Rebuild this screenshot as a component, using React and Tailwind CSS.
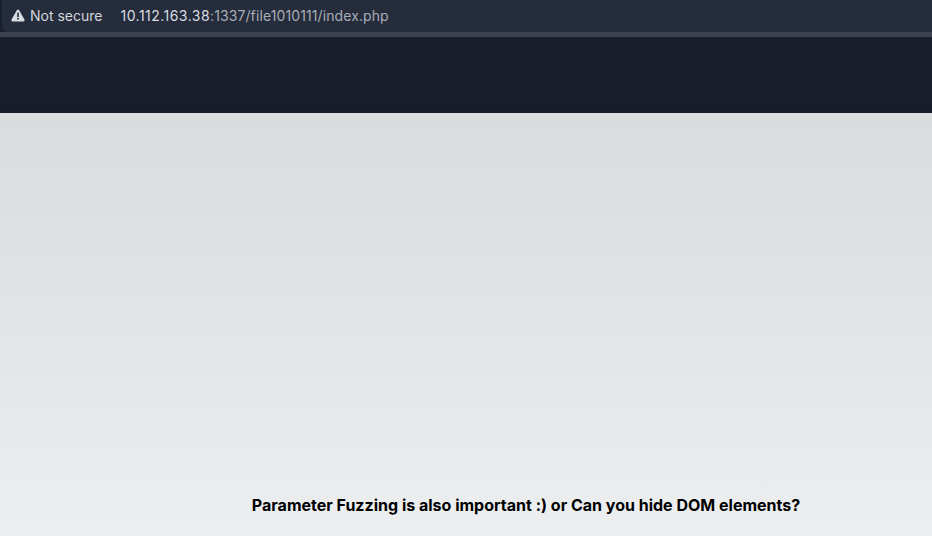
import React from 'react';

const WarningIcon = () => (
    <svg width="14" height="13" viewBox="0 0 14 13" className="shrink-0">
        <path d="M7 0.6c.5 0 .9.25 1.15.7l5.3 9.3c.5.9-.1 1.9-1.1 1.9H1.65c-1 0-1.6-1-1.1-1.9l5.3-9.3C6.1.85 6.5.6 7 .6z" fill="#d9dce1" />
        <rect x="6.2" y="3.6" width="1.6" height="4.4" fill="#252c3c" />
        <rect x="6.2" y="8.9" width="1.6" height="1.6" fill="#252c3c" />
    </svg>
);

export default function App() {
    return (
        <div className="h-[536px] w-[932px] overflow-hidden flex flex-col font-['Inter',sans-serif]">
            <div className="bg-[#1a1f2e]">
                <div className="h-[32px] ml-[2px] bg-[#252c3c] rounded-bl-[6px] flex items-center pl-[9px] pb-[2px] text-[14px]">
                    <WarningIcon />
                    <span className="ml-[5px] text-[#d3d6db]">Not secure</span>
                    <span className="ml-[18px] text-[#d9dce1] tracking-[0.47px]">10.112.163.38<span className="text-[#a8adb6] tracking-[0.1px]">:1337/file1010111/index.php</span></span>
                </div>
            </div>
            <div className="h-[5px] bg-[#3b4351]" />
            <div className="h-[76px] bg-gradient-to-b from-[#1a1f2e] to-[#181d2a]" />
            <div className="flex-1 bg-gradient-to-b from-[#d8dcdc] to-[#eceef0] flex flex-col justify-end items-center pb-[21px] pl-[120px]">
                <p className="text-[16px] leading-[20px] font-bold text-black">Parameter Fuzzing is also important :) or Can you hide DOM elements?</p>
            </div>
        </div>
    );
}
